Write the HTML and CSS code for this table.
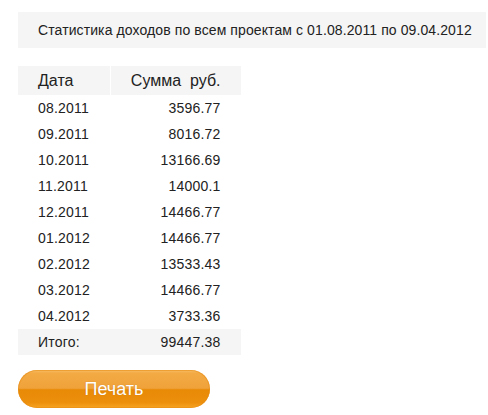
FILE: index.html
```html
<!DOCTYPE html>
<html lang="ru">
<head>
<meta charset="utf-8">
<link rel="stylesheet" href="styles.css">
</head>
<body>
<div class="page">
  <div class="title">Статистика доходов по всем проектам с 01.08.2011 по 09.04.2012</div>
  <table class="stats">
    <thead>
      <tr><th class="c-date">Дата</th><th class="c-sum">Сумма&nbsp; руб.</th></tr>
    </thead>
    <tbody>
      <tr><td class="c-date">08.2011</td><td class="c-sum">3596.77</td></tr>
      <tr><td class="c-date">09.2011</td><td class="c-sum">8016.72</td></tr>
      <tr><td class="c-date">10.2011</td><td class="c-sum">13166.69</td></tr>
      <tr><td class="c-date">11.2011</td><td class="c-sum">14000.1</td></tr>
      <tr><td class="c-date">12.2011</td><td class="c-sum">14466.77</td></tr>
      <tr><td class="c-date">01.2012</td><td class="c-sum">14466.77</td></tr>
      <tr><td class="c-date">02.2012</td><td class="c-sum">13533.43</td></tr>
      <tr><td class="c-date">03.2012</td><td class="c-sum">14466.77</td></tr>
      <tr><td class="c-date">04.2012</td><td class="c-sum">3733.36</td></tr>
    </tbody>
    <tfoot>
      <tr><td class="c-date">Итого:</td><td class="c-sum">99447.38</td></tr>
    </tfoot>
  </table>
  <button class="print-btn" type="button">Печать</button>
</div>
</body>
</html>
```
FILE: styles.css
```css
html, body {
  margin: 0;
  padding: 0;
  background: #ffffff;
}
body {
  font-family: "Liberation Sans", Arial, sans-serif;
  color: #222222;
}
.page {
  padding: 12px 2px 0 18px;
  display: flex;
  flex-direction: column;
  align-items: flex-start;
}
.title {
  align-self: stretch;
  background: #f5f5f5;
  height: 36px;
  line-height: 36px;
  padding-left: 20px;
  font-size: 14px;
  letter-spacing: 0.1px;
  color: #222;
}
.stats {
  margin-top: 18px;
  border-collapse: collapse;
  font-size: 14px;
  letter-spacing: 0.2px;
}
.stats th {
  background: #f5f5f5;
  font-weight: normal;
  font-size: 16px;
  letter-spacing: 0;
  height: 29px;
  padding: 0 20px;
  vertical-align: middle;
  white-space: nowrap;
}
.stats th.c-date {
  width: 50px;
  text-align: left;
  border-right: 1px solid #ffffff;
}
.stats th.c-sum {
  width: 90px;
  text-align: right;
}
.stats td {
  height: 26px;
  padding: 0 20px;
  vertical-align: middle;
  white-space: nowrap;
}
.stats td.c-date { text-align: left; }
.stats td.c-sum { text-align: right; }
.stats tfoot td {
  background: #f5f5f5;
}
.print-btn {
  margin-top: 15px;
  width: 192px;
  height: 38px;
  border-radius: 19px;
  border: none;
  padding: 0;
  font-family: "Liberation Sans", Arial, sans-serif;
  font-size: 18px;
  color: #ffffff;
  text-shadow: 0 0 1px rgba(150, 80, 0, 0.4);
  background: linear-gradient(to bottom,
    #f8c06a 0%,
    #f3aa44 8%,
    #f0a23a 48%,
    #e88a06 52%,
    #ec8f0c 85%,
    #f7a424 100%);
  box-shadow: inset 0 0 0 1px rgba(230, 140, 20, 0.6);
  cursor: pointer;
}
```
